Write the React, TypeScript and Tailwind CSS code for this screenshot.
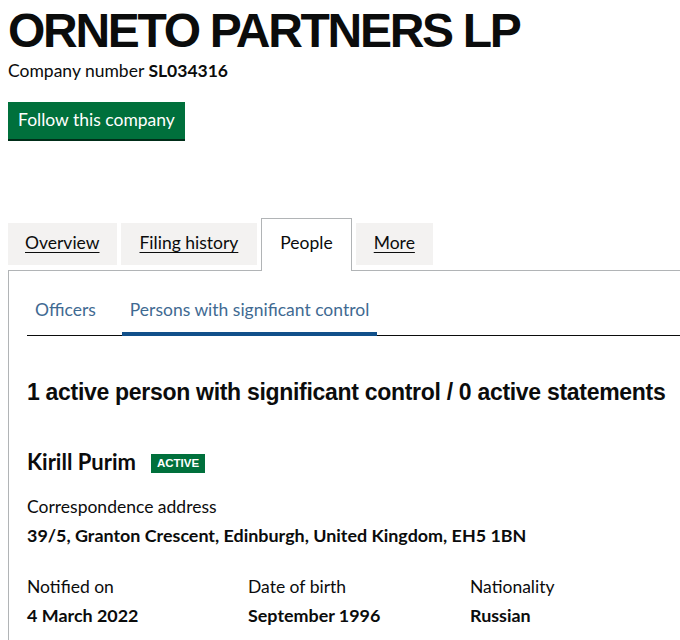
export default function App() {
  return (
    <div className="w-[680px] h-[640px] overflow-hidden bg-white pl-2 text-[#0b0c0c] [font-family:Lato,'Open_Sans',sans-serif]">
      <h1 className="mt-[7px] text-[48px] leading-[48px] font-bold tracking-[-2.3px] whitespace-nowrap [font-family:'Liberation_Sans',Arial,sans-serif]">
        ORNETO PARTNERS LP
      </h1>
      <p className="mt-[4px] text-[17.5px] leading-6">
        Company number <span className="font-bold">SL034316</span>
      </p>
      <div className="mt-[19px] flex">
        <button className="h-[37px] bg-[#00703c] px-[10px] pt-[6px] text-[17.5px] leading-6 text-white shadow-[0_2px_0_#002d18] self-start flex items-start">
          Follow this company
        </button>
      </div>

      <div className="relative z-10 mt-[79px] flex items-start gap-[4px] text-[17.5px] leading-6">
        <a className="mt-[5px] h-[42px] bg-[#f3f2f1] px-[17px] pt-[8px] underline underline-offset-[3px] decoration-1">
          Overview
        </a>
        <a className="mt-[5px] h-[42px] bg-[#f3f2f1] px-[19px] pt-[8px] underline underline-offset-[3px] decoration-1">
          Filing history
        </a>
        <span className="h-[53px] border border-b-0 border-[#b1b4b6] bg-white px-[18px] pt-[12px]">
          People
        </span>
        <a className="mt-[5px] h-[42px] bg-[#f3f2f1] px-[18px] pt-[8px] underline underline-offset-[3px] decoration-1">
          More
        </a>
      </div>

      <div className="-mt-px mr-[-40px] h-[400px] border-t border-l border-[#b1b4b6] pl-[18px] pt-[27px]">
        <div className="flex border-b border-[#0b0c0c] text-[17.5px] leading-6 text-[#3f6a92]">
          <span className="-mb-px mr-[18px] px-[8px] pb-[14px]">Officers</span>
          <span className="-mb-px border-b-4 border-[#11508a] px-[8px] pb-[10px]">
            Persons with significant control
          </span>
        </div>

        <h2 className="mt-[45px] text-[23px] leading-[23px] font-bold tracking-[-0.3px] whitespace-nowrap [font-family:'Liberation_Sans',Arial,sans-serif]">
          1 active person with significant control / 0 active statements
        </h2>

        <div className="mt-[46px] flex items-start">
          <span className="text-[22px] leading-6 font-bold">Kirill Purim</span>
          <span className="ml-[15px] mt-[4px] flex h-[19px] items-center bg-[#00703c] px-[6px] text-[11.5px] font-bold leading-none text-white [font-family:'Liberation_Sans',Arial,sans-serif]">
            ACTIVE
          </span>
        </div>

        <p className="mt-[21px] text-[17.5px] leading-6">Correspondence address</p>
        <p className="mt-[4px] text-[17.9px] leading-6 font-bold">
          39/5, Granton Crescent, Edinburgh, United Kingdom, EH5 1BN
        </p>

        <div className="mt-[28px] grid grid-cols-[221px_222px_1fr] text-[17.5px] leading-6">
          <div>
            <p>Notified on</p>
            <p className="mt-[4px] text-[17.9px] font-bold">4 March 2022</p>
          </div>
          <div>
            <p>Date of birth</p>
            <p className="mt-[4px] text-[17.9px] font-bold">September 1996</p>
          </div>
          <div>
            <p>Nationality</p>
            <p className="mt-[4px] text-[17.9px] font-bold">Russian</p>
          </div>
        </div>
      </div>
    </div>
  );
}
